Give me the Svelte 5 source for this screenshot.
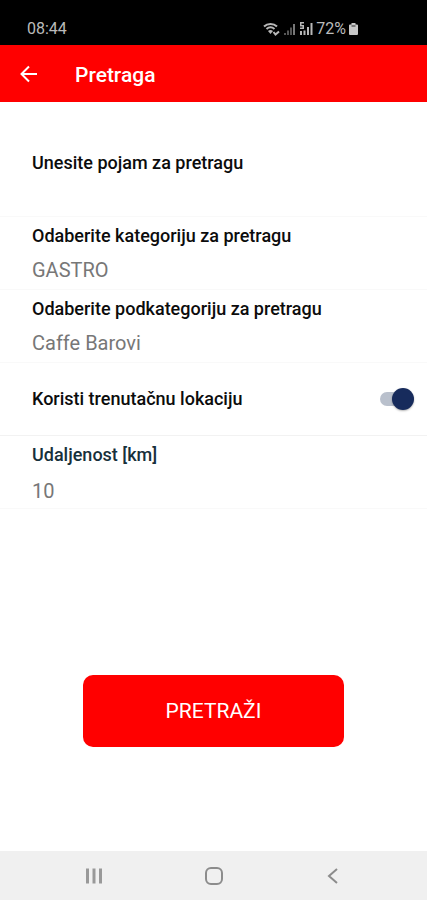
<script>
  let term = '';
  let category = 'GASTRO';
  let subcategory = 'Caffe Barovi';
  let useLocation = true;
  let distance = '10';

  const categories = ['GASTRO'];
  const subcategories = ['Caffe Barovi'];
</script>

<div class="screen">
  <div class="status">
    <span>08:44</span>
    <div class="indicators">
      <svg width="17" height="14" viewBox="0 0 17 14" fill="none" stroke="#b8b8b8" stroke-width="2">
        <path d="M1 4.5C4.5 1 10.500 1 14 4.500M3.500 7C6 4.800 9 4.800 11.500 7" />
        <path d="M5 9L7.500 12L10 9Q7.500 7 5 9Z" fill="#b8b8b8" stroke="none" />
        <path d="M10.500 10L12.500 12.500L16 9.500" stroke-width="2" />
      </svg>
      <svg width="13" height="14" viewBox="0 0 13 14" fill="#777">
        <path d="M1 11h2v2H1zM4 8.500h2V13H4zM7 5.500h2V13H7z" fill="#555" />
        <path d="M10 2h2v11h-2z" />
      </svg>
      <svg width="14" height="14" viewBox="0 0 14 14" fill="#b8b8b8">
        <path d="M1 0h4v1.500H2.500v1.500H5v4H1V5.500h2.500v-1H1zM1 9h2v4H1zM4.500 8.500h2V13h-2zM8 5h2v8H8zM11.500 1h2v12h-2z" />
      </svg>
      <span class="percent">72%</span>
      <svg width="9" height="14" viewBox="0 0 9 14" fill="#c8c8c8">
        <path d="M2.500 1h4v1.500H8q1 0 1 1V12q0 1-1 1H1q-1 0-1-1V3.500q0-1 1-1h1.500z" />
        <path d="M2.500 3h4v2h-4z" fill="#777" />
      </svg>
    </div>
  </div>

  <header>
    <button class="back" type="button" aria-label="Natrag">
      <svg width="18" height="18" viewBox="0 0 18 18" fill="none" stroke="#fff" stroke-width="2">
        <path d="M17 9H2M9 1.500L1.500 9L9 16.500" />
      </svg>
    </button>
    <h1>Pretraga</h1>
  </header>

  <form on:submit|preventDefault>
    <div class="row">
      <label for="term">Unesite pojam za pretragu</label>
      <input id="term" type="text" bind:value={term} />
    </div>
    <div class="row">
      <label for="category">Odaberite kategoriju za pretragu</label>
      <select id="category" bind:value={category}>
        {#each categories as item}
          <option value={item}>{item}</option>
        {/each}
      </select>
    </div>
    <div class="row">
      <label for="subcategory">Odaberite podkategoriju za pretragu</label>
      <select id="subcategory" bind:value={subcategory}>
        {#each subcategories as item}
          <option value={item}>{item}</option>
        {/each}
      </select>
    </div>
    <div class="row toggle">
      <label for="location">Koristi trenutačnu lokaciju</label>
      <input id="location" type="checkbox" role="switch" bind:checked={useLocation} />
    </div>
    <div class="row distance">
      <label for="distance">Udaljenost [km]</label>
      <input id="distance" type="text" inputmode="numeric" bind:value={distance} />
    </div>
    <button class="submit" type="submit">PRETRAŽI</button>
  </form>

  <nav>
    <button type="button" aria-label="Nedavne aplikacije">
      <svg width="18" height="18" viewBox="0 0 18 18" fill="none" stroke="#999" stroke-width="3">
        <path d="M2.500 1.500V16.500M9 1.500V16.500M15.500 1.500V16.500" />
      </svg>
    </button>
    <button type="button" aria-label="Početni zaslon">
      <svg width="18" height="18" viewBox="0 0 18 18" fill="none" stroke="#8c8c8c" stroke-width="2">
        <rect x="1" y="1" width="16" height="16" rx="5" />
      </svg>
    </button>
    <button type="button" aria-label="Povratak">
      <svg width="18" height="18" viewBox="0 0 18 18" fill="none" stroke="#8c8c8c" stroke-width="2">
        <path d="M13 2L5 9L13 16" />
      </svg>
    </button>
  </nav>
</div>

<style>
  :global(body) {
    background: #fff;
  }

  .screen {
    display: flex;
    flex-direction: column;
    min-height: 100vh;
    font-family: Roboto, "Liberation Sans", sans-serif;
    color: #0c0c0c;
  }

  .status {
    display: flex;
    justify-content: space-between;
    align-items: center;
    height: 45px;
    box-sizing: border-box;
    padding: 12px 69px 0 27px;
    background: #000;
    color: #bbb;
    font-size: 16px;
  }

  .indicators {
    display: flex;
    align-items: center;
    gap: 3px;
  }

  svg {
    display: block;
  }

  header {
    display: flex;
    align-items: center;
    height: 57px;
    padding: 0 20px;
    background: #f00;
    color: #fff;
  }

  button {
    border: none;
    padding: 0;
    background: none;
    font-family: inherit;
    cursor: pointer;
  }

  .back {
    width: 55px;
  }

  h1 {
    margin: 0;
    padding-top: 2px;
    font-size: 21px;
    line-height: 28px;
    font-weight: 500;
  }

  form {
    display: flex;
    flex-direction: column;
    flex: 1;
    padding-top: 42px;
  }

  .row {
    display: flex;
    flex-direction: column;
    height: 73px;
    box-sizing: border-box;
    padding: 8px 13px 0 32px;
    border-bottom: 1px solid #f9f9f9;
  }

  label {
    font-size: 18px;
    line-height: 22px;
    font-weight: 500;
  }

  .row input,
  .row select {
    appearance: none;
    border: none;
    outline: none;
    margin: 0;
    padding: 0;
    background: transparent;
    color: #777;
    font-family: inherit;
    font-size: 20px;
  }

  .row input[type='text'],
  .row select {
    height: 32px;
    margin-top: 7px;
  }

  .row.toggle {
    flex-direction: row;
    align-items: center;
    justify-content: space-between;
    padding-top: 0;
    border-color: #f2f2f2;
  }

  .toggle input {
    display: flex;
    align-items: center;
    width: 28px;
    height: 14px;
    margin-right: 6px;
    border-radius: 7px;
    background: #b9c0cc;
    cursor: pointer;
  }

  .toggle input::before {
    content: '';
    flex: none;
    width: 22px;
    height: 22px;
    margin-left: -6px;
    border-radius: 50%;
    background: #fff;
    box-shadow: 0 1px 2px rgba(0, 0, 0, 0.3);
  }

  .toggle input:checked::before {
    margin-left: 12px;
    background: #172b5c;
  }

  .distance label {
    color: #17303b;
  }

  .row.distance input {
    margin-top: 9px;
  }

  .submit {
    align-self: center;
    width: 61%;
    height: 72px;
    margin: 166px 0 32px;
    border-radius: 10px;
    background: #f00;
    color: #fff;
    font-size: 21px;
  }

  nav {
    display: flex;
    justify-content: space-between;
    align-items: center;
    height: 49px;
    padding: 0 20%;
    background: #f0f0f0;
  }
</style>
